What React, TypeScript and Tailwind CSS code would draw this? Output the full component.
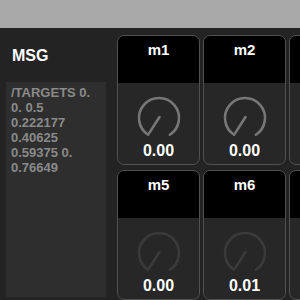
import React from "react";

type Dial = { name: string; value: string };

const topRow: Dial[] = [
  { name: "m1", value: "0.00" },
  { name: "m2", value: "0.00" },
  { name: "m3", value: "0.00" },
  { name: "m4", value: "0.00" },
];

const bottomRow: Dial[] = [
  { name: "m5", value: "0.00" },
  { name: "m6", value: "0.01" },
  { name: "m7", value: "0.00" },
  { name: "m8", value: "0.00" },
];

const msgLines = ["/TARGETS 0.", "0. 0.5", "0.222177", "0.40625", "0.59375 0.", "0.76649"];

function Knob({ color }: { color: string }) {
  // 33deg each side of straight down is the dead zone
  const r = 20;
  const a = (33 * Math.PI) / 180;
  const sx = 24 - r * Math.sin(a);
  const sy = 24 + r * Math.cos(a);
  const ex = 24 + r * Math.sin(a);
  const nx = 24 - 18 * Math.sin(a);
  const ny = 24 + 18 * Math.cos(a);
  return (
    <svg width="48" height="48" viewBox="0 0 48 48" fill="none">
      <path
        d={`M ${sx} ${sy} A ${r} ${r} 0 1 1 ${ex} ${sy}`}
        stroke={color}
        strokeWidth="2.6"
        strokeLinecap="round"
      />
      <line x1="24.5" y1="23" x2={nx} y2={ny} stroke={color} strokeWidth="2.6" strokeLinecap="round" />
    </svg>
  );
}

function DialCard({ dial, dim }: { dial: Dial; dim?: boolean }) {
  return (
    <div className="flex h-[130px] w-[83px] shrink-0 flex-col overflow-hidden rounded-[7px] border border-[#505050] bg-[#272727]">
      <div className="flex h-[47px] justify-center bg-black pt-[5px] text-[15px] font-bold leading-[18px] text-white">
        {dial.name}
      </div>
      <div className="flex flex-col items-center pt-[11px]">
        <Knob color={dim ? "#3a3a3a" : "#777777"} />
        <div className="text-[16px] font-bold leading-[18px] text-white">{dial.value}</div>
      </div>
    </div>
  );
}

export default function App() {
  return (
    <div
      className="flex h-[300px] w-[300px] flex-col overflow-hidden bg-[#232323]"
      style={{ fontFamily: '"Liberation Sans", Arial, sans-serif' }}
    >
      <div className="h-[28px] shrink-0 bg-[#a9a9a9]" />
      <div className="flex min-h-0 flex-1">
        {/* message panel */}
        <div className="flex w-[117px] shrink-0 flex-col pb-[3px] pl-[6px] pt-[19px]">
          <div className="pl-[6px] text-[16px] font-bold leading-[18px] text-white">MSG</div>
          <div className="mt-[17px] w-[100px] flex-1 bg-[#2e2e2e] pl-[5px] pt-[3px] text-[13px] font-bold leading-[15px] text-[#8a8a8a]">
            {msgLines.map((line) => (
              <div key={line}>{line}</div>
            ))}
          </div>
        </div>

        {/* dial grid */}
        <div className="flex flex-col gap-[5px] pt-[7px]">
          <div className="flex gap-[3px]">
            {topRow.map((d) => (
              <DialCard key={d.name} dial={d} />
            ))}
          </div>
          <div className="flex gap-[3px]">
            {bottomRow.map((d) => (
              <DialCard key={d.name} dial={d} dim />
            ))}
          </div>
        </div>
      </div>
    </div>
  );
}
